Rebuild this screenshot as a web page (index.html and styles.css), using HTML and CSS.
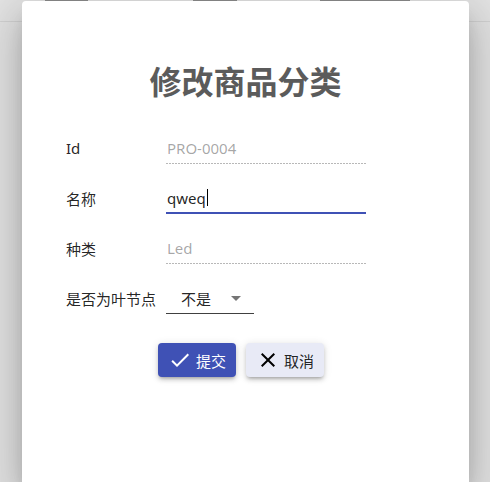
FILE: index.html
```html
<!DOCTYPE html>
<html lang="zh">
<head>
<meta charset="utf-8">
<title>修改商品分类</title>
<link rel="stylesheet" href="styles.css">
</head>
<body>
<div class="page">
  <div class="bg-head">
    <span class="bg-text t1"></span>
    <span class="bg-text t2"></span>
    <span class="bg-text t3"></span>
  </div>
  <div class="bg-line"></div>
</div>
<div class="dialog">
  <h1 class="title">修改商品分类</h1>
  <form class="form">
    <div class="row">
      <label class="label">Id</label>
      <div class="field disabled"><span class="value">PRO-0004</span></div>
    </div>
    <div class="row">
      <label class="label">名称</label>
      <div class="field focused"><span class="value">qweq</span><span class="caret"></span></div>
    </div>
    <div class="row">
      <label class="label">种类</label>
      <div class="field disabled"><span class="value">Led</span></div>
    </div>
    <div class="row">
      <label class="label">是否为叶节点</label>
      <div class="select"><span class="select-value">不是</span><span class="arrow"></span></div>
    </div>
    <div class="actions">
      <button type="button" class="btn primary">
        <svg class="icon" viewBox="0 0 24 24"><path d="M9 16.17L4.83 12l-1.42 1.41L9 19 21 7l-1.41-1.41z"/></svg>
        <span>提交</span>
      </button>
      <button type="button" class="btn secondary">
        <svg class="icon" viewBox="0 0 24 24"><path d="M19 6.41L17.59 5 12 10.59 6.41 5 5 6.41 10.59 12 5 17.59 6.41 19 12 13.41 17.59 19 19 17.59 13.41 12z"/></svg>
        <span>取消</span>
      </button>
    </div>
  </form>
</div>
</body>
</html>
```
FILE: styles.css
```css
html, body {
  margin: 0;
  padding: 0;
}
body {
  width: 490px;
  height: 482px;
  overflow: hidden;
  background: #e3e3e3;
  font-family: "Noto Sans", "Noto Sans CJK SC", sans-serif;
  position: relative;
}
.page {
  height: 482px;
}
.bg-head {
  display: flex;
  height: 21px;
  border-bottom: 1px solid #d2d2d2;
}
.bg-text {
  height: 1px;
  background: #8c8c8c;
}
.t1 { width: 43px; margin-left: 45px; }
.t2 { width: 44px; margin-left: 105px; }
.t3 { width: 90px; margin-left: 83px; }
.dialog {
  position: absolute;
  left: 22px;
  top: 1px;
  width: 447px;
  height: 481px;
  box-sizing: border-box;
  background: #fff;
  border-radius: 4px 4px 0 0;
  padding: 59px 44px 0;
  box-shadow: 0 11px 15px -7px rgba(0,0,0,.2), 0 24px 38px 3px rgba(0,0,0,.14), 0 9px 46px 8px rgba(0,0,0,.12);
}
.title {
  margin: 0;
  height: 40px;
  line-height: 40px;
  font-size: 32px;
  font-weight: 700;
  color: #5b5b5b;
  text-align: center;
  font-family: "Noto Sans CJK SC", sans-serif;
}
.form {
  margin-top: 23px;
  display: flex;
  flex-direction: column;
}
.row {
  display: flex;
  align-items: center;
  height: 50px;
}
.label {
  width: 100px;
  font-size: 15px;
  color: rgba(0,0,0,.87);
  font-family: "Noto Sans", "Noto Sans CJK SC", sans-serif;
}
.field {
  position: relative;
  width: 200px;
  height: 30px;
  line-height: 30px;
  font-size: 15px;
  box-sizing: border-box;
  display: flex;
  align-items: center;
}
.field .value {
  padding-left: 1px;
}
.field.disabled {
  color: rgba(0,0,0,.36);
}
.field.disabled::after {
  content: "";
  position: absolute;
  left: 0;
  right: 0;
  bottom: -1px;
  height: 1px;
  background-image: linear-gradient(to right, rgba(0,0,0,.28) 0%, rgba(0,0,0,.28) 67%, transparent 0%);
  background-size: 3px 1px;
  background-repeat: repeat-x;
}
.field.focused {
  color: rgba(0,0,0,.87);
  border-bottom: 2px solid #3f51b5;
  height: 31px;
  margin-top: 1px;
}
.caret {
  display: inline-block;
  width: 1px;
  height: 17px;
  background: #000;
  margin-left: 1px;
}
.select {
  width: 88px;
  height: 30px;
  box-sizing: border-box;
  border-bottom: 1px solid rgba(0,0,0,.75);
  margin-top: 1px;
  display: flex;
  align-items: center;
  padding-left: 15px;
  padding-right: 13px;
  font-size: 15px;
  color: rgba(0,0,0,.87);
  font-family: "Noto Sans CJK SC", sans-serif;
}
.select-value {
  flex: 1;
}
.arrow {
  width: 0;
  height: 0;
  border-left: 5px solid transparent;
  border-right: 5px solid transparent;
  border-top: 5px solid rgba(0,0,0,.54);
}
.actions {
  display: flex;
  gap: 10px;
  margin-top: 20px;
  margin-left: 92px;
}
.btn {
  display: flex;
  align-items: center;
  gap: 4px;
  width: 78px;
  height: 34px;
  padding: 0 10px;
  box-sizing: border-box;
  border: none;
  border-radius: 4px;
  font-size: 15px;
  font-family: "Noto Sans CJK SC", sans-serif;
  box-shadow: 0 3px 3px -2px rgba(0,0,0,.2), 0 3px 4px 0 rgba(0,0,0,.14), 0 1px 8px 0 rgba(0,0,0,.12);
}
.icon {
  width: 24px;
  height: 24px;
  flex: none;
}
.primary {
  background: #3f51b5;
  color: #fff;
}
.primary .icon {
  fill: #fff;
}
.secondary {
  background: #e8eaf6;
  color: rgba(0,0,0,.87);
}
.secondary .icon {
  fill: #000;
}
```
